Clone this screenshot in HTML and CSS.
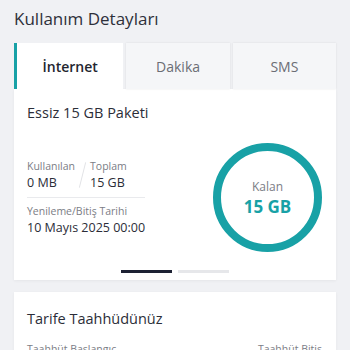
FILE: index.html
```html
<!DOCTYPE html>
<html lang="tr">
<head>
<meta charset="utf-8">
<link rel="stylesheet" href="styles.css">
</head>
<body>
<h1 class="page-title">Kullanım Detayları</h1>
<div class="tabs">
  <div class="tab active">İnternet</div>
  <div class="tab">Dakika</div>
  <div class="tab">SMS</div>
</div>
<div class="card usage">
  <h2 class="card-title">Essiz 15 GB Paketi</h2>
  <div class="usage-row">
    <div class="info">
      <div class="pair">
        <div class="cell">
          <div class="label">Kullanılan</div>
          <div class="value">0 MB</div>
        </div>
        <div class="slash"></div>
        <div class="cell">
          <div class="label">Toplam</div>
          <div class="value">15 GB</div>
        </div>
      </div>
      <div class="divider"></div>
      <div class="label">Yenileme/Bitiş Tarihi</div>
      <div class="value">10 Mayıs 2025 00:00</div>
    </div>
    <div class="ring">
      <div class="ring-label">Kalan</div>
      <div class="ring-value">15 GB</div>
    </div>
  </div>
  <div class="pager">
    <span class="dot on"></span>
    <span class="dot"></span>
  </div>
</div>
<div class="card tariff">
  <h2 class="card-title">Tarife Taahhüdünüz</h2>
  <div class="tariff-row">
    <div class="label">Taahhüt Başlangıç</div>
    <div class="label">Taahhüt Bitiş</div>
  </div>
</div>
</body>
</html>
```
FILE: styles.css
```css
* { box-sizing: border-box; }
html, body { height: 350px; overflow: hidden; }
body {
  margin: 0;
  padding: 0 14px;
  background: #f0f1f4;
  font-family: "Open Sans", "Noto Sans", sans-serif;
  color: #2b2d38;
}
.page-title {
  margin: 0;
  padding-top: 8px;
  font-size: 17px;
  line-height: 22px;
  font-weight: 400;
  color: #2e303a;
}
.tabs {
  display: flex;
  gap: 3px;
  margin-top: 13px;
  height: 46px;
}
.tab {
  flex: 1;
  display: flex;
  align-items: center;
  justify-content: center;
  font-size: 14px;
  color: #6b6d75;
  background: #f5f6f8;
  box-shadow: 0 0 2px rgba(0,0,0,0.09);
}
.tab.active {
  flex: 1.03;
  background: #fff;
  color: #23252f;
  font-weight: 600;
  border-left: 3px solid #18a1a6;
  box-shadow: none;
}
.card {
  background: #fff;
  box-shadow: 0 1px 3px rgba(0,0,0,0.05);
}
.usage {
  padding: 14px 14px 7px 13px;
}
.card-title {
  margin: 0;
  font-size: 14.5px;
  line-height: 20px;
  font-weight: 400;
  color: #2b2d38;
}
.usage-row {
  display: flex;
  align-items: center;
  justify-content: space-between;
  margin-top: 20px;
}
.info {
  display: flex;
  flex-direction: column;
  white-space: nowrap;
}
.pair {
  display: flex;
  align-items: center;
}
.cell { display: flex; flex-direction: column; }
.slash {
  width: 1px;
  height: 26px;
  background: #e2e3e6;
  transform: rotate(14deg);
  margin: 0 7px 0 7px;
}
.label {
  font-size: 10.5px;
  line-height: 15px;
  color: #7b7d85;
}
.value {
  font-size: 12.5px;
  line-height: 17px;
  color: #2b2d38;
}
.divider {
  height: 1px;
  background: #e9eaed;
  margin: 6px 0 6px;
}
.ring {
  width: 109px;
  height: 109px;
  border: 8px solid #18a1a6;
  border-radius: 50%;
  display: flex;
  flex-direction: column;
  align-items: center;
  justify-content: center;
  padding-top: 2px;
}
.ring-label {
  font-size: 12px;
  line-height: 16px;
  color: #7b7d85;
}
.ring-value {
  font-size: 17px;
  line-height: 24px;
  font-weight: 700;
  color: #18a1a6;
}
.pager {
  display: flex;
  justify-content: center;
  gap: 6px;
  margin-top: 18px;
}
.dot {
  width: 51px;
  height: 3px;
  background: #e6e7ea;
}
.dot.on { background: #1d2133; }
.tariff {
  margin-top: 12px;
  padding: 17px 14px 0 13px;
  height: 80px;
}
.tariff-row {
  display: flex;
  justify-content: space-between;
  margin-top: 13px;
}
```
